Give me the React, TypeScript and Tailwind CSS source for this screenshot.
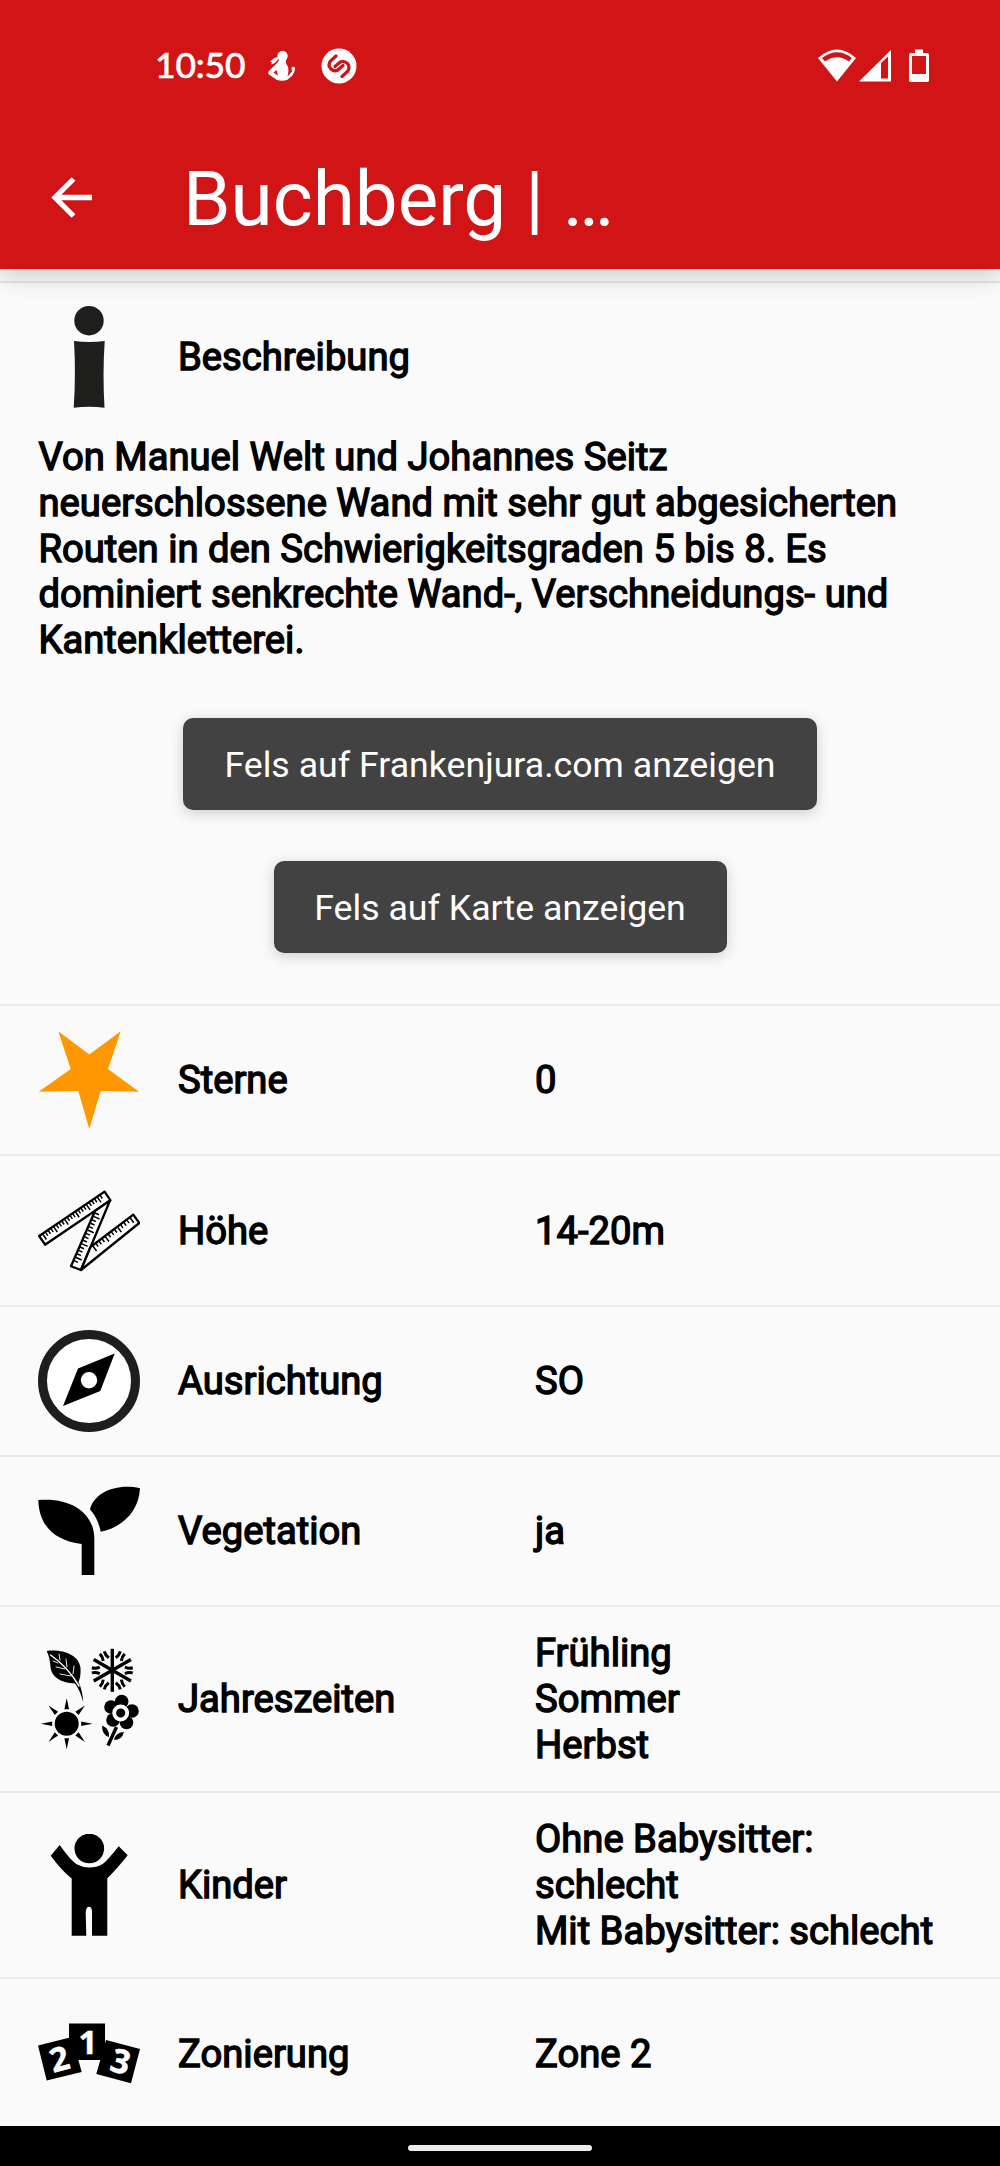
import type { ReactNode } from "react";

// real regular glyphs with a thin outline, like the synthetic bold of a webview
const bold = "[-webkit-text-stroke:1.4px_black]";

function BabyIcon() {
  return (
    <svg className="ml-[22px] h-[34px] w-[28px]" viewBox="0 0 28 34" fill="white">
      <circle cx="14.5" cy="7" r="5.2" />
      <path d="M11 8 Q9 14 3 15.500 L4 13.500 L2 12.500 Q6 8.500 10.500 7.500z" />
      <path
        fillRule="evenodd"
        d="M11 11 H18 V14 L20 18 Q21 22 19.500 27.500 L24 22.500 L23.500 19 L24.500 17.500 L27 18.500 Q27.500 23 24 27 L19 31 Q14 32.500 9 31 L1 25.500 Q-.500 24 1 22 L10 13z M5.500 23.500 L8.500 21 L10 27z"
      />
    </svg>
  );
}

function ShazamIcon() {
  return (
    <svg className="ml-[25px] h-[36px] w-[36px]" viewBox="0 0 36 36" fill="none">
      <circle cx="18" cy="18" r="17.500" fill="white" />
      <g stroke="#d11416" strokeWidth="3.300" strokeLinecap="round">
        <path d="M15 8 L9.500 13 Q6.500 17 9.500 20.500 Q14 25 18 21 L22 17.500" />
        <path d="M21 28.500 L26.500 23.500 Q29.500 19.500 26.500 15.500 Q22 11.500 18 15 L14 18.500" />
      </g>
    </svg>
  );
}

function StatusBar() {
  return (
    <div className="flex h-[132px] items-center justify-between pl-[155px] pr-[71px]">
      <div className="flex items-center">
        <span className="w-[91px] pb-[3px] font-['Lato'] text-[35.500px] font-medium leading-none tracking-[-0.2px] [-webkit-text-stroke:0.5px_white]">10:50</span>
        <BabyIcon />
        <ShazamIcon />
      </div>
      <div className="flex items-center">
        <svg className="h-[34px] w-[38px]" viewBox="0 0 38 34" fill="white">
          <path fillRule="evenodd" d="M0 9 Q19 -8 38 9 L19 32.500z M4 9 L7 12.500 Q19 4 31 12.500 L34 9 Q19 -2.500 4 9z" />
        </svg>
        <svg className="ml-[3px] h-[34px] w-[32px]" viewBox="0 0 32 34" fill="white">
          <path fillRule="evenodd" d="M0 32.500 L32 1 V32.500z M22 14 V29.500 H29 V7.500z" />
        </svg>
        <svg className="ml-[18px] h-[34px] w-[20px]" viewBox="0 0 20 34" fill="white">
          <path fillRule="evenodd" d="M6 .500 H14 V4 H18 Q20 4 20 6 V31.500 Q20 33 18 33 H2 Q0 33 0 31.500 V6 Q0 4 2 4 H6z M3 7 V25 H17 V7z" />
        </svg>
      </div>
    </div>
  );
}

function IconBox({ children }: { children: ReactNode }) {
  return (
    <svg className="h-[102px] w-[102px] shrink-0" viewBox="0 0 102 102">
      {children}
    </svg>
  );
}

function InfoIcon() {
  return (
    <IconBox>
      <g fill="#1e1e1c">
        <circle cx="51" cy="14.700" r="14.700" />
        <path d="M36 35 Q51 37 66.700 35 Q64.500 68 66.500 101.700 Q51 100 35.700 101.700 Q38 68 36 35z" />
      </g>
    </IconBox>
  );
}

function StarIcon() {
  return (
    <IconBox>
      <path
        fill="#ff9800"
        d="M20.300 2.300 L51.300 25.500 L82.700 2.300 L70 40 L101 62.700 L62.700 62 L51.300 100 L40.300 62 L.700 62.700 L32.700 40z"
      />
    </IconBox>
  );
}

// one ruler segment; ticks hang from its upper edge
function Ruler({ x, y, angle, length, ticks }: { x: number; y: number; angle: number; length: number; ticks: number[] }) {
  return (
    <g transform={`translate(${x} ${y}) rotate(${angle})`}>
      <rect x="0" y="0" width={length} height="10.500" fill="white" strokeWidth="2.300" />
      {ticks.map((t) => (
        <path key={t} d={`M${4 + t * 3.3} 0 V${t % 4 === 0 ? 7 : 4.5}`} strokeWidth="1.500" />
      ))}
    </g>
  );
}

function HeightIcon() {
  const all = Array.from({ length: 22 }, (_, i) => i);
  return (
    <IconBox>
      <g stroke="black" strokeLinejoin="round" fill="none">
        <Ruler x={1.2} y={56} angle={-34.2} length={79} ticks={all} />
        <path d="M72 20.500 L43 90 L33 86.200 L57 31z" fill="white" strokeWidth="2.300" />
        {all.slice(0, 15).map((t) => (
          <path
            key={t}
            d="M0 0 H4"
            strokeWidth="1.500"
            transform={`translate(${57 - t * 1.5} ${33 + t * 3.4}) rotate(24) scale(${t % 4 === 1 ? 1.7 : 1.1} 1)`}
          />
        ))}
        <path d="M95.300 34.700 L101.300 43 L43 90 L52.500 67z" fill="white" strokeWidth="2.300" />
        {all.slice(0, 13).map((t) => (
          <path
            key={t}
            d="M0 0 V4"
            strokeWidth="1.500"
            transform={`translate(${54.5 + t * 3.1} ${65.5 - t * 2.35}) rotate(-37) scale(1 ${t % 4 === 0 ? 1.7 : 1.1})`}
          />
        ))}
      </g>
    </IconBox>
  );
}

function CompassIcon() {
  return (
    <IconBox>
      <circle cx="51" cy="51" r="46.500" fill="white" stroke="#1e1e1c" strokeWidth="9" />
      <path d="M76.700 23.600 L40 38.600 L25 76 L62.300 61z" />
      <circle cx="51" cy="50.300" r="8.200" fill="white" />
    </IconBox>
  );
}

function PlantIcon() {
  return (
    <IconBox>
      <path d="M.300 20 C34 17 56 34 56.300 58 V95 H43.700 V64 C18 61 1 47 .300 20z" />
      <path d="M102 8.300 C78 3 56 13 52 29.500 Q60 38 62.700 51.700 C86 47 101 30 102 8.300z" />
    </IconBox>
  );
}

function SeasonsIcon() {
  const spokes = [0, 60, 120, 180, 240, 300];
  const rays = [0, 45, 90, 135, 180, 225, 270, 315];
  return (
    <IconBox>
      <path d="M8.700 3 C25 1 41 7 42.500 20 Q43 29 40.500 34 Q44.500 42 45.300 54.500 Q42 42 37 35.500 C22 35 13 28 12.500 19 Q12 10 8.700 3z" />
      <g stroke="white" fill="none" strokeLinecap="round">
        <path d="M12.500 7 Q30 19 41 38" strokeWidth="1.500" />
        <path d="M22 12 L21 6 M29 19 L28 11 M35 26 L36 18 M20 15 L15 13 M27 21 L18 19 M33 28 L22 26" strokeWidth=".900" />
      </g>
      <g stroke="black" transform="translate(74.300 22.300)">
        {spokes.map((a) => (
          <g key={a} transform={`rotate(${a})`} fill="none">
            <path strokeWidth="3.400" d="M0 0 V-21.500" />
            <path strokeWidth="3" d="M-8 -19 Q-7 -15 -3.500 -12.500 M8 -19 Q7 -15 3.500 -12.500" />
          </g>
        ))}
      </g>
      <g transform="translate(28.700 75.700)">
        <circle r="12" />
        {rays.map((a) => (
          <path key={a} transform={`rotate(${a})`} d="M-2.300 -14.500 H2.300 L0 -25.800z" />
        ))}
      </g>
      <circle cx="83.700" cy="53.500" r="6.800" />
      <circle cx="94" cy="63" r="6.800" />
      <circle cx="88.500" cy="74.500" r="6.800" />
      <circle cx="75" cy="72" r="6.800" />
      <circle cx="73" cy="59" r="6.800" />
      <circle cx="82.700" cy="65" r="6.500" fill="black" stroke="white" strokeWidth="3.800" />
      <path d="M78.500 79 L70 97.500" stroke="black" strokeWidth="3.400" />
      <path d="M64 77.500 Q72 81 71 89 Q64 87 64 77.500z M76 92 Q78 84 86 84 Q84 92 76 92z" />
    </IconBox>
  );
}

function ChildIcon() {
  return (
    <IconBox>
      <circle cx="51.300" cy="14.500" r="14.800" />
      <path d="M21.700 11 Q33 27 39 30.500 Q45 33.500 51.300 33.500 Q60 33.500 65.300 29.500 Q70 26 80.700 12.300 L89.700 21.300 Q78 36 69.300 44.300 V101.700 H54 V77 Q53.500 72.700 51 72.700 Q48.300 72.700 47.700 78 L48.300 101.700 H33.700 V44.500 Q24 37 12.700 21.700z" />
    </IconBox>
  );
}

function ZoneIcon() {
  return (
    <IconBox>
      <path d="M31 20.500 H67 V57 H31z M0 42.500 L34 34 L43.700 69 L8.700 77.500z M68 37 L102 46 L93 80.300 L58.300 71z" />
      <g fill="white" stroke="white" strokeWidth=".500" fontFamily="Noto Sans, sans-serif" fontWeight="700" fontSize="33" textAnchor="middle">
        <text x="0" y="11.700" transform="translate(21.300 56) rotate(-15)">2</text>
        <text x="50" y="51">1</text>
        <text x="0" y="11.700" transform="translate(82.700 58.300) rotate(15)">3</text>
      </g>
    </IconBox>
  );
}

interface RowProps {
  icon: ReactNode;
  label: string;
  lines: string[];
  className: string;
}

function Row({ icon, label, lines, className }: RowProps) {
  return (
    <div className={`flex shrink-0 items-center border-t-2 border-[#ebebeb] pl-[38px] ${className}`}>
      {icon}
      <div className={`ml-[38px] w-[357px] pt-[2px] ${bold}`}>{label}</div>
      <div className={`pt-[2px] ${bold}`}>
        {lines.map((line) => (
          <div key={line}>{line}</div>
        ))}
      </div>
    </div>
  );
}

function Button({ text, className }: { text: string; className: string }) {
  return (
    <button
      className={`h-[92px] rounded-[10px] bg-[#424242] pt-[2px] text-[35.700px] text-white shadow-[0_3px_14px_rgba(0,0,0,0.18)] ${className}`}
    >
      {text}
    </button>
  );
}

export default function App() {
  return (
    <div className="flex h-[2166px] w-[1000px] flex-col overflow-hidden bg-[#fafafa] font-['Roboto',sans-serif] text-[38.200px] leading-[45.800px] text-black">
      <header className="relative h-[268.500px] shrink-0 bg-[#d11416] text-white shadow-[0_6px_24px_rgba(0,0,0,0.2)]">
        <StatusBar />
        <div className="flex h-[131px] items-center pl-[51px]">
          <svg className="h-[41px] w-[41px]" viewBox="0 0 41 41" fill="none" stroke="white" strokeWidth="5.300">
            <path d="M41 20.500 H4 M22.500 2 L4 20.500 L22.500 39" />
          </svg>
          <h1 className="ml-[91px] pt-[2px] text-[76.400px] leading-[92px]">Buchberg | …</h1>
        </div>
      </header>

      <main className="flex h-[1857.500px] shrink-0 flex-col overflow-hidden pt-[12.500px]">
        <section className="flex h-[723px] shrink-0 flex-col border-t-2 border-[#e4e4e4] pt-[23px]">
          <div className="flex items-center pl-[38px]">
            <InfoIcon />
            <div className={`ml-[38px] pt-[2px] ${bold}`}>Beschreibung</div>
          </div>
          <p className={`mt-[27px] pl-[38.500px] ${bold}`}>
            Von Manuel Welt und Johannes Seitz
            <br />
            neuerschlossene Wand mit sehr gut abgesicherten
            <br />
            Routen in den Schwierigkeitsgraden 5 bis 8. Es
            <br />
            dominiert senkrechte Wand-, Verschneidungs- und
            <br />
            Kantenkletterei.
          </p>
          <div className="mt-[54.500px] flex flex-col items-center gap-[51px]">
            <Button text="Fels auf Frankenjura.com anzeigen" className="w-[634px]" />
            <Button text="Fels auf Karte anzeigen" className="w-[453px]" />
          </div>
        </section>

        <Row icon={<StarIcon />} label="Sterne" lines={["0"]} className="h-[150px]" />
        <Row icon={<HeightIcon />} label="Höhe" lines={["14-20m"]} className="h-[151px]" />
        <Row icon={<CompassIcon />} label="Ausrichtung" lines={["SO"]} className="h-[150px]" />
        <Row icon={<PlantIcon />} label="Vegetation" lines={["ja"]} className="h-[150px]" />
        <Row icon={<SeasonsIcon />} label="Jahreszeiten" lines={["Frühling", "Sommer", "Herbst"]} className="h-[186px]" />
        <Row
          icon={<ChildIcon />}
          label="Kinder"
          lines={["Ohne Babysitter:", "schlecht", "Mit Babysitter: schlecht"]}
          className="h-[186px]"
        />
        <Row icon={<ZoneIcon />} label="Zonierung" lines={["Zone 2"]} className="h-[151px]" />
      </main>

      <footer className="flex h-[40px] shrink-0 items-center justify-center bg-black pt-[4px]">
        <div className="h-[6px] w-[184px] rounded-full bg-[#ebebeb]" />
      </footer>
    </div>
  );
}
